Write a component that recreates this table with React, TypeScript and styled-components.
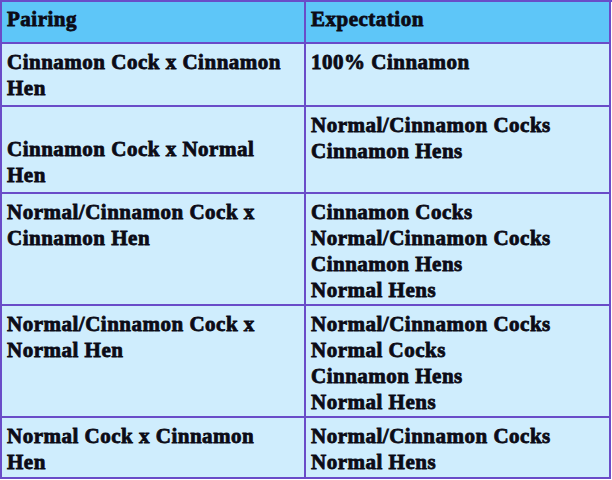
import React from 'react';
import styled, { createGlobalStyle } from 'styled-components';

const GlobalStyle = createGlobalStyle`
  html, body {
    margin: 0;
    padding: 0;
    background: #ffffff;
  }
`;

const Table = styled.div`
  display: grid;
  grid-template-columns: 304px 305px;
  grid-template-rows: 42px 63px 87px 112px 112px 61px;
  width: 611px;
  border-top: 2px solid #6a4cc8;
  border-left: 2px solid #6a4cc8;
  font-family: "Liberation Serif", "Times New Roman", serif;
  font-weight: bold;
  font-size: 21px;
  line-height: 26px;
  letter-spacing: 0.5px;
  color: #0b0b16;
  -webkit-text-stroke: 0.8px #0b0b16;
`;

const Cell = styled.div<{ $head?: boolean; $align?: 'start' | 'end' }>`
  box-sizing: border-box;
  padding: ${p => (p.$head ? '4px 5px' : '5px 5px 4px')};
  border-right: 2px solid #6a4cc8;
  border-bottom: 2px solid #6a4cc8;
  background: ${p => (p.$head ? '#5ec6f8' : '#cfedfd')};
  display: flex;
  flex-direction: column;
  justify-content: ${p => (p.$align === 'end' ? 'flex-end' : 'flex-start')};
`;

const Line = styled.div`
  white-space: nowrap;
`;

interface Row {
  pairing: string[];
  expectation: string[];
  pairingAlign?: 'start' | 'end';
}

const rows: Row[] = [
  { pairing: ['Cinnamon Cock x Cinnamon', 'Hen'], expectation: ['100% Cinnamon'] },
  {
    pairing: ['Cinnamon Cock x Normal', 'Hen'],
    expectation: ['Normal/Cinnamon Cocks', 'Cinnamon Hens'],
    pairingAlign: 'end',
  },
  {
    pairing: ['Normal/Cinnamon Cock x', 'Cinnamon Hen'],
    expectation: ['Cinnamon Cocks', 'Normal/Cinnamon Cocks', 'Cinnamon Hens', 'Normal Hens'],
  },
  {
    pairing: ['Normal/Cinnamon Cock x', 'Normal Hen'],
    expectation: ['Normal/Cinnamon Cocks', 'Normal Cocks', 'Cinnamon Hens', 'Normal Hens'],
  },
  { pairing: ['Normal Cock x Cinnamon', 'Hen'], expectation: ['Normal/Cinnamon Cocks', 'Normal Hens'] },
];

const App: React.FC = () => {
  return (
    <>
      <GlobalStyle />
      <Table>
        <Cell $head>
          <Line>Pairing</Line>
        </Cell>
        <Cell $head>
          <Line>Expectation</Line>
        </Cell>
        {rows.map((r, i) => (
          <React.Fragment key={i}>
            <Cell $align={r.pairingAlign}>
              {r.pairing.map(t => (
                <Line key={t}>{t}</Line>
              ))}
            </Cell>
            <Cell>
              {r.expectation.map(t => (
                <Line key={t}>{t}</Line>
              ))}
            </Cell>
          </React.Fragment>
        ))}
      </Table>
    </>
  );
};

export default App;
